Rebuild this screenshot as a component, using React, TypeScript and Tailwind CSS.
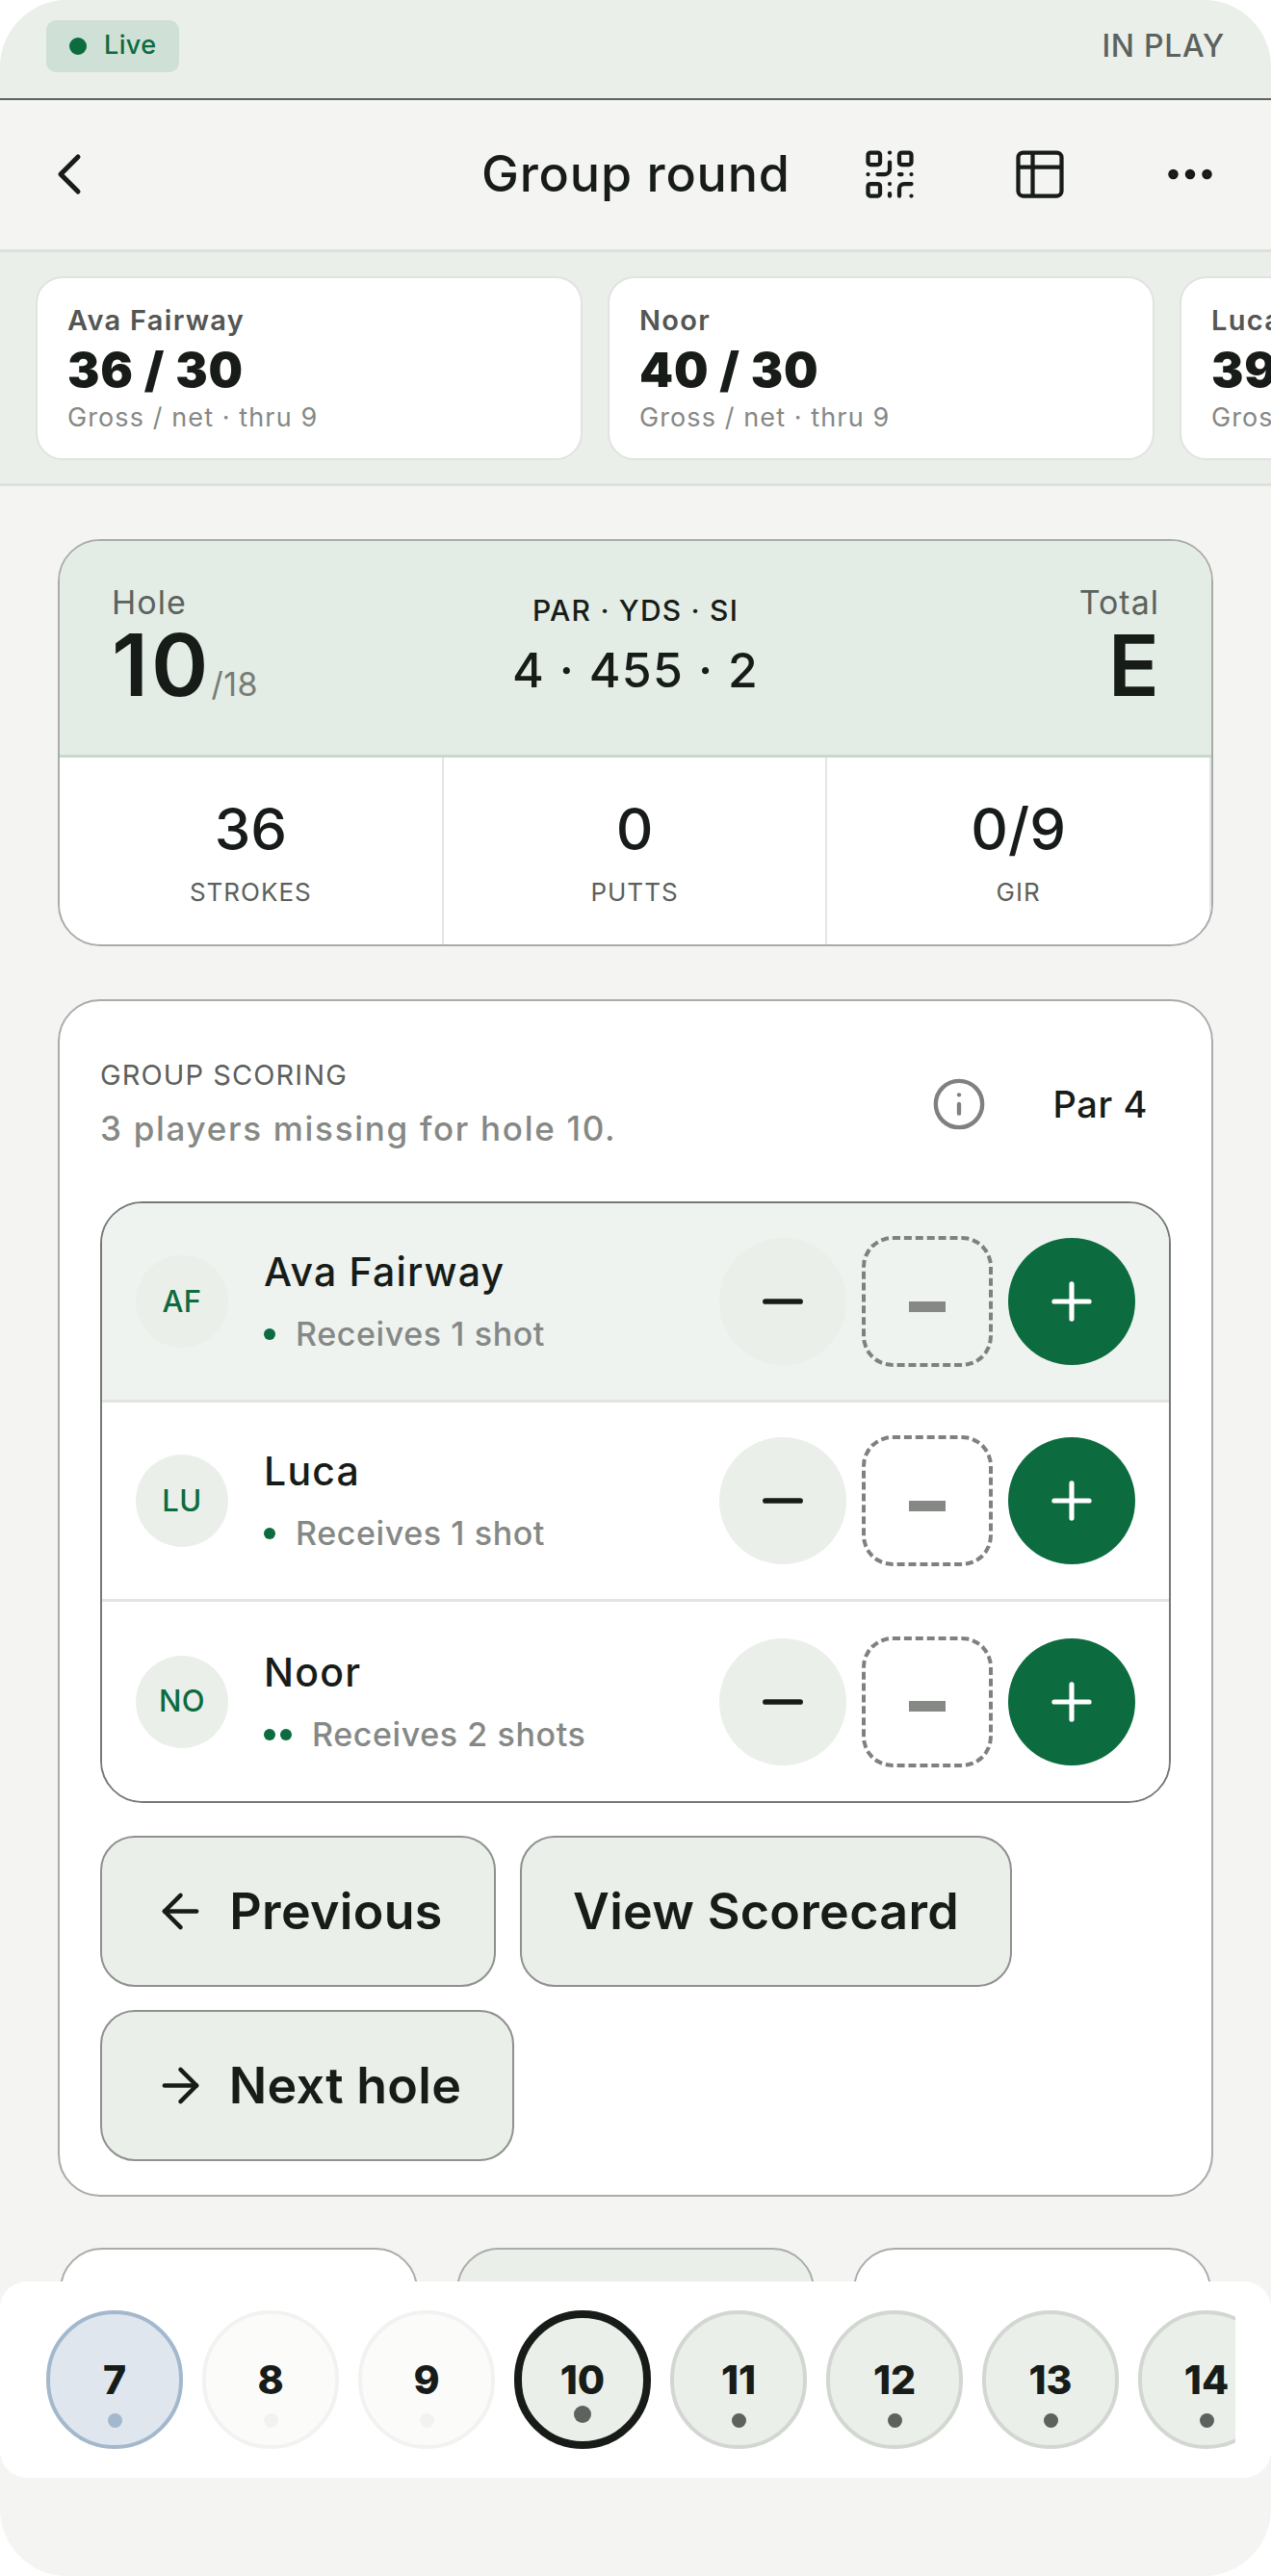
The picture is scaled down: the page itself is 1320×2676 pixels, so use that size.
import { ArrowLeft, ArrowRight, ChevronLeft, Ellipsis, Info, Minus, Plus, QrCode, Table2 } from "lucide-react";

const leaders = [
  { name: "Ava Fairway", score: "36 / 30" },
  { name: "Noor", score: "40 / 30" },
  { name: "Luca", score: "39 / 30" },
];

const players = [
  { initials: "AF", name: "Ava Fairway", note: "Receives 1 shot", dots: 1, active: true },
  { initials: "LU", name: "Luca", note: "Receives 1 shot", dots: 1, active: false },
  { initials: "NO", name: "Noor", note: "Receives 2 shots", dots: 2, active: false },
];

const holes = [
  { n: 7, ring: "border-[#a3b8cd] bg-[#dfe6ed]", dot: "bg-[#a3b8cd]" },
  { n: 8, ring: "border-[#f2f3f1] bg-[#fbfbfa]", dot: "bg-[#f2f3f1]" },
  { n: 9, ring: "border-[#f2f3f1] bg-[#fbfbfa]", dot: "bg-[#f2f3f1]" },
  { n: 10, ring: "border-[#171c18] bg-[#ebefea]", dot: "bg-[#5c625e]", current: true },
  { n: 11, ring: "border-[#d2d7d1] bg-[#ebefea]", dot: "bg-[#5c625e]" },
  { n: 12, ring: "border-[#d2d7d1] bg-[#ebefea]", dot: "bg-[#5c625e]" },
  { n: 13, ring: "border-[#d2d7d1] bg-[#ebefea]", dot: "bg-[#5c625e]" },
  { n: 14, ring: "border-[#d2d7d1] bg-[#ebefea]", dot: "bg-[#5c625e]" },
];

function Stat({ value, label }: { value: string; label: string }) {
  return (
    <div className="flex flex-1 flex-col items-center border-r-[2px] border-[#e4e6e3] pt-[39px]">
      <div className="text-[60px] leading-[70px] font-medium text-[#171c18]">{value}</div>
      <div className="mt-[15px] text-[26px] leading-[32px] tracking-[1px] text-[#5c5f5c]">{label}</div>
    </div>
  );
}

function PlayerRow({ p, last }: { p: (typeof players)[number]; last: boolean }) {
  return (
    <div className={`flex h-[207px] items-center px-[35px] ${p.active ? "bg-[#eef3f0]" : "bg-white"} ${last ? "" : "border-b-[3px] border-[#e2e5e2]"}`}>
      <div className="flex h-[96px] w-[96px] shrink-0 items-center justify-center rounded-full bg-[#ebefea] text-[31px] font-medium tracking-[0.5px] text-[#0c6b3f]">
        {p.initials}
      </div>
      <div className="ml-[37px] flex-1">
        <div className="text-[41px] leading-[48px] font-medium tracking-[1.2px] text-[#171c18]">{p.name}</div>
        <div className="mt-[20px] flex items-center text-[34px] leading-[42px] font-medium tracking-[0.6px] text-[#858885]">
          <span className="mr-[21px] flex gap-[5px]">
            {Array.from({ length: p.dots }).map((_, i) => (
              <span key={i} className="h-[12px] w-[12px] rounded-full bg-[#0c6b3f]" />
            ))}
          </span>
          {p.note}
        </div>
      </div>
      <div className="flex items-center gap-[16px]">
        <button className="flex h-[132px] w-[132px] items-center justify-center rounded-full bg-[#ebefea] text-[#171c18]">
          <Minus size={62} strokeWidth={2.2} />
        </button>
        <div className="flex h-[136px] w-[136px] items-center justify-center rounded-[32px] border-[4px] border-dashed border-[#7f817f] pt-[10px]">
          <span className="h-[11px] w-[38px] bg-[#858885]" />
        </div>
        <button className="flex h-[132px] w-[132px] items-center justify-center rounded-full bg-[#0c6b3f] text-white">
          <Plus size={62} strokeWidth={2} />
        </button>
      </div>
    </div>
  );
}

function ActionButton({ children, width }: { children: React.ReactNode; width: string }) {
  return (
    <button className={`flex h-[157px] items-center justify-center gap-[22px] rounded-[36px] border-[2px] border-[#8e918e] bg-[#ebefea] text-[52px] font-semibold tracking-[0.3px] text-[#171c18] ${width}`}>
      {children}
    </button>
  );
}

export default function App() {
  return (
    <div className="relative h-[2676px] w-[1320px] overflow-hidden rounded-[70px] bg-[#f4f4f2] font-['Inter',sans-serif]">
      {/* Status strip */}
      <div className="flex h-[104px] items-center justify-between border-b-[2px] border-[#5c625e] bg-[#ebefea] pl-[48px] pr-[48px]">
        <div className="-mt-[7px] flex h-[54px] w-[138px] items-center rounded-[10px] bg-[#cfe0d6] pl-[24px] text-[27px] font-medium tracking-[0.4px] text-[#0c6b3f]">
          <span className="mr-[18px] h-[18px] w-[18px] rounded-full bg-[#0c6b3f]" />
          Live
        </div>
        <div className="-mt-[6px] text-[32px] font-medium tracking-[0.7px] text-[#5c625e]">IN PLAY</div>
      </div>

      {/* Title bar */}
      <div className="relative flex h-[158px] items-center border-b-[3px] border-[#dde0dd] text-[#171c18]">
        <ChevronLeft size={72} strokeWidth={1.7} className="ml-[36px] mt-[-2px]" />
        <div className="absolute left-[500px] top-[47px] text-[52px] leading-[60px] font-medium tracking-[0.8px]">Group round</div>
        <QrCode size={60} strokeWidth={1.7} className="absolute left-[894px] top-[47px]" />
        <Table2 size={60} strokeWidth={1.7} className="absolute left-[1050px] top-[47px]" />
        <Ellipsis size={60} strokeWidth={2.2} className="absolute left-[1206px] top-[47px]" />
      </div>

      {/* Running totals per player */}
      <div className="flex h-[243px] gap-[26px] overflow-hidden border-b-[3px] border-[#dde0dd] bg-[#ebefea] pl-[37px] pt-[25px]">
        {leaders.map((l) => (
          <div key={l.name} className="h-[191px] w-[568px] shrink-0 rounded-[28px] border-[2px] border-[#e0e3e0] bg-white pl-[31px] pt-[27px]">
            <div className="text-[29px] leading-[34px] font-semibold tracking-[1.3px] text-[#545654]">{l.name}</div>
            <div className="mt-[4px] text-[50px] leading-[60px] font-black tracking-[0.9px] text-[#171c18]">{l.score}</div>
            <div className="mt-[4px] text-[27px] leading-[32px] tracking-[1.1px] text-[#858885]">Gross / net · thru 9</div>
          </div>
        ))}
      </div>

      <div className="px-[60px] pt-[55px]">
        {/* Current hole summary */}
        <div className="h-[423px] overflow-hidden rounded-[44px] border-[2px] border-[#a9aca9]">
          <div className="grid h-[225px] grid-cols-3 border-b-[3px] border-[#c9d7cf] bg-[#e3ede6] px-[54px] pt-[43px]">
            <div>
              <div className="text-[34px] leading-[42px] tracking-[1px] text-[#5c625e]">Hole</div>
              <div className="mt-[1px] flex items-baseline">
                <span className="text-[90px] leading-[86px] font-semibold tracking-[3px] text-[#171c18]">10</span>
                <span className="text-[34px] tracking-[0.5px] text-[#787c78]">/18</span>
              </div>
            </div>
            <div className="flex flex-col items-center pt-[9px]">
              <div className="text-[30px] leading-[40px] font-medium tracking-[1.2px] text-[#171c18]">PAR · YDS · SI</div>
              <div className="mt-[12px] text-[50px] leading-[60px] font-medium tracking-[1.3px] text-[#171c18]">4 · 455 · 2</div>
            </div>
            <div className="flex flex-col items-end">
              <div className="text-[34px] leading-[42px] tracking-[1px] text-[#5c625e]">Total</div>
              <div className="mt-[1px] text-[88px] leading-[86px] font-semibold text-[#171c18]">E</div>
            </div>
          </div>
          <div className="flex h-[194px] bg-white">
            <Stat value="36" label="STROKES" />
            <Stat value="0" label="PUTTS" />
            <Stat value="0/9" label="GIR" />
          </div>
        </div>

        {/* Group scoring */}
        <div className="mt-[55px] h-[1244px] rounded-[44px] border-[2px] border-[#a9aca9] bg-white px-[42px] pt-[59px]">
          <div className="flex items-start justify-between">
            <div>
              <div className="text-[29px] leading-[36px] tracking-[1.1px] text-[#5c5f5c]">GROUP SCORING</div>
              <div className="mt-[15px] text-[35px] leading-[44px] font-medium tracking-[1.7px] text-[#858885]">3 players missing for hole 10.</div>
            </div>
            <div className="mr-[24px] mt-[19px] flex items-center gap-[68px]">
              <Info size={58} strokeWidth={1.8} className="text-[#7f817f]" />
              <span className="text-[38px] font-medium tracking-[0.6px] text-[#171c18]">Par 4</span>
            </div>
          </div>
          <div className="mt-[54px] overflow-hidden rounded-[44px] border-[2px] border-[#767976]">
            {players.map((p, i) => (
              <PlayerRow key={p.initials} p={p} last={i === players.length - 1} />
            ))}
          </div>
          <div className="mt-[34px] flex flex-wrap gap-x-[25px] gap-y-[24px]">
            <ActionButton width="w-[411px]">
              <ArrowLeft size={57} strokeWidth={1.9} />
              Previous
            </ActionButton>
            <ActionButton width="w-[511px]">View Scorecard</ActionButton>
            <ActionButton width="w-[430px]">
              <ArrowRight size={57} strokeWidth={1.9} />
              Next hole
            </ActionButton>
          </div>
        </div>

        {/* Quick action tiles, mostly under the hole picker */}
        <div className="mt-[53px] flex justify-between px-[2px]">
          <div className="h-[200px] w-[372px] rounded-[44px] border-[2px] border-[#a9aca9] bg-white" />
          <div className="h-[200px] w-[372px] rounded-[44px] border-[2px] border-[#a9aca9] bg-[#ebefea]" />
          <div className="h-[200px] w-[372px] rounded-[44px] border-[2px] border-[#a9aca9] bg-white" />
        </div>
      </div>

      {/* Hole picker */}
      <div className="absolute left-0 top-[2370px] h-[204px] w-[1320px] rounded-[28px] bg-white pl-[48px] pr-[37px] pt-[30px]">
        <div className="flex gap-[20px] overflow-hidden">
          {holes.map((h) => (
            <div
              key={h.n}
              className={`relative flex h-[144px] w-[142px] shrink-0 items-center justify-center rounded-full ${h.ring} ${h.current ? "border-[8px]" : "border-[4px]"}`}
            >
              <span className="text-[41px] leading-[44px] font-extrabold text-[#171c18]">{h.n}</span>
              <span className={`absolute rounded-full ${h.dot} ${h.current ? "bottom-[19px] h-[18px] w-[18px]" : "bottom-[18px] h-[15px] w-[15px]"}`} />
            </div>
          ))}
        </div>
      </div>
    </div>
  );
}
